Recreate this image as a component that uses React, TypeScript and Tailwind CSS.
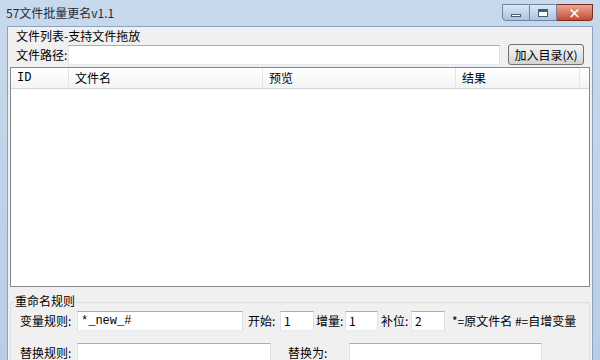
import * as React from "react";

const font = { fontFamily: '"Noto Sans CJK SC", "Liberation Sans", sans-serif' };

const TextBox: React.FunctionComponent<{ w: string; value?: string; mono?: boolean }> = ({ w, value, mono }) => (
  <div
    className={`${w} h-[20px] bg-white border border-[#abadb3] border-r-[#dbdfe6] border-b-[#e3e9ef] border-l-[#e2e3ea] flex items-center px-[3px] text-[12px] text-black leading-none`}
    style={mono ? { fontFamily: '"Liberation Mono", monospace' } : undefined}
  >
    {value}
  </div>
);

const App: React.FunctionComponent = () => {
  const columns = [
    { label: "ID", width: "w-[58px]" },
    { label: "文件名", width: "w-[194px]" },
    { label: "预览", width: "w-[193px]" },
    { label: "结果", width: "w-[124px]" },
  ];

  return (
    <div className="w-[600px] h-[360px] overflow-hidden bg-gradient-to-b from-[#c9d9ec] to-[#b9cde6] flex flex-col text-[12px] text-black" style={font}>
      {/* title bar */}
      <div className="h-[26px] shrink-0 flex items-start justify-between pl-[6px] pr-[7px]">
        <span className="mt-[4px] text-[12px] text-[#1e2b3c]">57文件批量更名v1.1</span>
        <div className="flex mt-[4px]">
          <div className="w-[28px] h-[17px] rounded-bl-[4px] border border-[#6d83a3] bg-gradient-to-b from-[#dce7f4] to-[#aec3de] flex items-center justify-center">
            <div className="w-[10px] h-[3px] bg-white border border-[#435a79] mt-[5px]" />
          </div>
          <div className="w-[27px] h-[17px] border border-l-0 border-[#6d83a3] bg-gradient-to-b from-[#dce7f4] to-[#aec3de] flex items-center justify-center">
            <div className="w-[10px] h-[8px] border border-[#435a79] border-t-[3px] bg-white" />
          </div>
          <div className="w-[36px] h-[17px] rounded-br-[4px] border border-l-0 border-[#7b2c22] bg-gradient-to-b from-[#e8a493] to-[#c54b35] flex items-center justify-center text-white text-[13px] font-bold leading-none">
            ×
          </div>
        </div>
      </div>

      {/* client area */}
      <div className="flex-1 ml-[7px] mr-[7px] bg-[#f0f0f0] border border-[#8da2c0] border-b-0 flex flex-col px-[2px]">
        <div className="pl-[6px] pt-[2px] h-[15px] leading-[14px]">文件列表-支持文件拖放</div>

        <div className="flex items-center mt-[2px] h-[21px]">
          <span className="pl-[6px] w-[58px]">文件路径:</span>
          <TextBox w="w-[432px]" />
          <div className="ml-[8px] w-[76px] h-[21px] rounded-[3px] border border-[#707070] bg-gradient-to-b from-[#f2f2f2] via-[#e6e6e6] to-[#d3d3d3] flex items-center justify-center text-[12px]">
            加入目录(X)
          </div>
        </div>

        {/* list view */}
        <div className="mt-[2px] h-[220px] bg-white border border-[#828790] flex flex-col">
          <div className="h-[21px] flex bg-gradient-to-b from-white to-[#f3f4f6] border-b border-[#d5d5d5]">
            {columns.map((c) => (
              <div key={c.label} className={`${c.width} border-r border-[#e3e5e8] flex items-center pl-[6px]`}>
                {c.label === "ID" ? <span style={{ fontFamily: '"Liberation Mono", monospace' }}>ID</span> : c.label}
              </div>
            ))}
          </div>
        </div>

        {/* rename rules group */}
        <div className="relative mt-[15px] flex-1 border border-[#d5dfe5] rounded-[3px] border-b-0 pt-[8px] pl-[9px]">
          <span className="absolute -top-[10px] left-[3px] bg-[#f0f0f0] px-[1px] leading-[16px]">重命名规则</span>
          <div className="flex items-center h-[20px]">
            <span className="w-[57px]">变量规则:</span>
            <TextBox w="w-[166px]" value="*_new_#" mono />
            <span className="ml-[5px] w-[32px]">开始:</span>
            <TextBox w="w-[34px]" value="1" />
            <span className="ml-[2px] w-[29px]">增量:</span>
            <TextBox w="w-[33px]" value="1" />
            <span className="ml-[3px] w-[30px]">补位:</span>
            <TextBox w="w-[34px]" value="2" />
            <span className="ml-[7px]">*=原文件名 #=自增变量</span>
          </div>
          <div className="flex items-center h-[20px] mt-[12px]">
            <span className="w-[57px]">替换规则:</span>
            <TextBox w="w-[194px]" />
            <span className="ml-[17px] w-[61px]">替换为:</span>
            <TextBox w="w-[193px]" />
          </div>
        </div>
      </div>
    </div>
  );
};

export default App;
